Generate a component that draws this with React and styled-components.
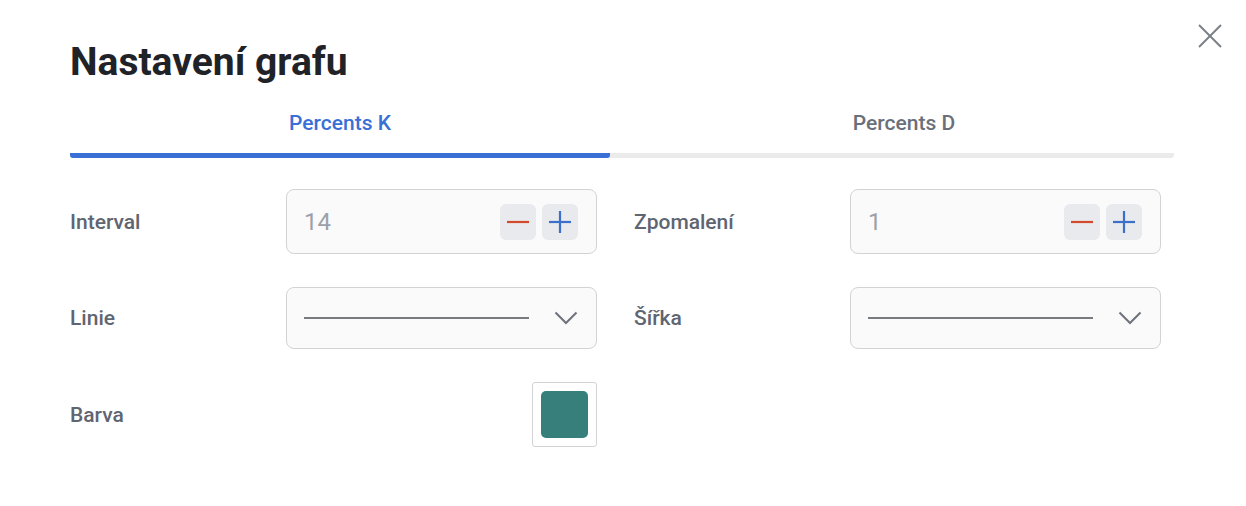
import React, { useState } from "react";
import styled, { createGlobalStyle } from "styled-components";

const Global = createGlobalStyle`
  html, body { margin: 0; padding: 0; background: #ffffff; }
  body { font-family: Roboto, "Liberation Sans", sans-serif; }
`;

const Dialog = styled.div`
  position: relative;
  box-sizing: border-box;
  width: 1246px;
  height: 506px;
  padding: 36px 72px 0 70px;
  background: #fff;
`;

const CloseButton = styled.button`
  position: absolute;
  top: 21px;
  right: 21px;
  width: 30px;
  height: 30px;
  padding: 0;
  border: none;
  background: none;
  cursor: pointer;
  display: flex;
  align-items: center;
  justify-content: center;
`;

const Title = styled.h2`
  margin: 0;
  font-size: 39px;
  line-height: 52px;
  font-weight: 700;
  color: #1f2328;
`;

const Tabs = styled.div`
  display: grid;
  grid-template-columns: 540px 540px;
  column-gap: 24px;
  margin-top: 23px;
  background: linear-gradient(#ebebec, #ebebec) bottom / 100% 5px no-repeat;
  border-radius: 3px;
`;

const Tab = styled.button`
  border: none;
  background: none;
  padding: 0 0 18px;
  font-family: Roboto, "Liberation Sans", sans-serif;
  font-size: 21px;
  line-height: 24px;
  font-weight: 500;
  color: ${(p) => (p.$active ? "#3a6fd6" : "#6a6f79")};
  border-bottom: 5px solid ${(p) => (p.$active ? "#3a6fd6" : "transparent")};
  border-radius: 3px;
  cursor: pointer;
`;

const Form = styled.div`
  display: grid;
  grid-template-columns: 527px 527px;
  column-gap: 37px;
  row-gap: 33px;
  margin-top: 31px;
`;

const Field = styled.div`
  display: grid;
  grid-template-columns: 216px 1fr;
  align-items: center;
`;

const Label = styled.span`
  font-size: 21px;
  line-height: 24px;
  font-weight: 500;
  color: #5f6571;
`;

const Box = styled.div`
  box-sizing: border-box;
  height: ${(p) => p.$h}px;
  border: 1px solid #d3d3d6;
  border-radius: 8px;
  background: #fafafa;
  display: flex;
  align-items: center;
  padding: 0 18px 0 17px;
`;

const Value = styled.span`
  flex: 1;
  font-size: 24px;
  line-height: 28px;
  color: #9ca1a9;
`;

const StepButtons = styled.div`
  display: flex;
  gap: 6px;
`;

const StepButton = styled.button`
  width: 36px;
  height: 36px;
  padding: 0;
  border: none;
  border-radius: 6px;
  background: #e9eaed;
  display: flex;
  align-items: center;
  justify-content: center;
  cursor: pointer;
`;

const LineSample = styled.span`
  flex: 1;
  height: 2px;
  background: #777a7f;
  margin-right: 25px;
`;

const ColorCell = styled.div`
  display: flex;
  justify-content: flex-end;
`;

const ColorBox = styled.div`
  box-sizing: border-box;
  width: 65px;
  height: 65px;
  border: 1px solid #d3d3d6;
  border-radius: 3px;
  padding: 8px;
  background: #fff;
`;

const Swatch = styled.div`
  width: 100%;
  height: 100%;
  border-radius: 5px;
  background: ${(p) => p.$color};
`;

const Minus = () => (
  <svg width="22" height="22" viewBox="0 0 22 22">
    <line x1="0" y1="11" x2="22" y2="11" stroke="#d14a2b" strokeWidth="2.2" />
  </svg>
);
const Plus = () => (
  <svg width="22" height="22" viewBox="0 0 22 22">
    <line x1="0" y1="11" x2="22" y2="11" stroke="#3a70cc" strokeWidth="2.2" />
    <line x1="11" y1="0" x2="11" y2="22" stroke="#3a70cc" strokeWidth="2.2" />
  </svg>
);
const Chevron = () => (
  <svg width="24" height="14" viewBox="0 0 24 14">
    <polyline points="1.5,1.5 12,12 22.5,1.5" fill="none" stroke="#6d727c" strokeWidth="2" />
  </svg>
);

const NumberInput = ({ value }) => (
  <Box $h={65}>
    <Value>{value}</Value>
    <StepButtons>
      <StepButton aria-label="minus"><Minus /></StepButton>
      <StepButton aria-label="plus"><Plus /></StepButton>
    </StepButtons>
  </Box>
);

const LineSelect = () => (
  <Box $h={62}>
    <LineSample />
    <Chevron />
  </Box>
);

export default function App() {
  const [tab, setTab] = useState(0);
  return (
    <>
      <Global />
      <Dialog>
        <CloseButton aria-label="close">
          <svg width="24" height="24" viewBox="0 0 24 24">
            <line x1="1" y1="1" x2="23" y2="23" stroke="#7b7f88" strokeWidth="2" />
            <line x1="23" y1="1" x2="1" y2="23" stroke="#7b7f88" strokeWidth="2" />
          </svg>
        </CloseButton>
        <Title>Nastavení grafu</Title>
        <Tabs>
          <Tab $active={tab === 0} onClick={() => setTab(0)}>Percents K</Tab>
          <Tab $active={tab === 1} onClick={() => setTab(1)}>Percents D</Tab>
        </Tabs>
        <Form>
          <Field>
            <Label>Interval</Label>
            <NumberInput value="14" />
          </Field>
          <Field>
            <Label>Zpomalení</Label>
            <NumberInput value="1" />
          </Field>
          <Field>
            <Label>Linie</Label>
            <LineSelect />
          </Field>
          <Field>
            <Label>Šířka</Label>
            <LineSelect />
          </Field>
          <Field>
            <Label>Barva</Label>
            <ColorCell>
              <ColorBox>
                <Swatch $color="#367f7a" />
              </ColorBox>
            </ColorCell>
          </Field>
        </Form>
      </Dialog>
    </>
  );
}
